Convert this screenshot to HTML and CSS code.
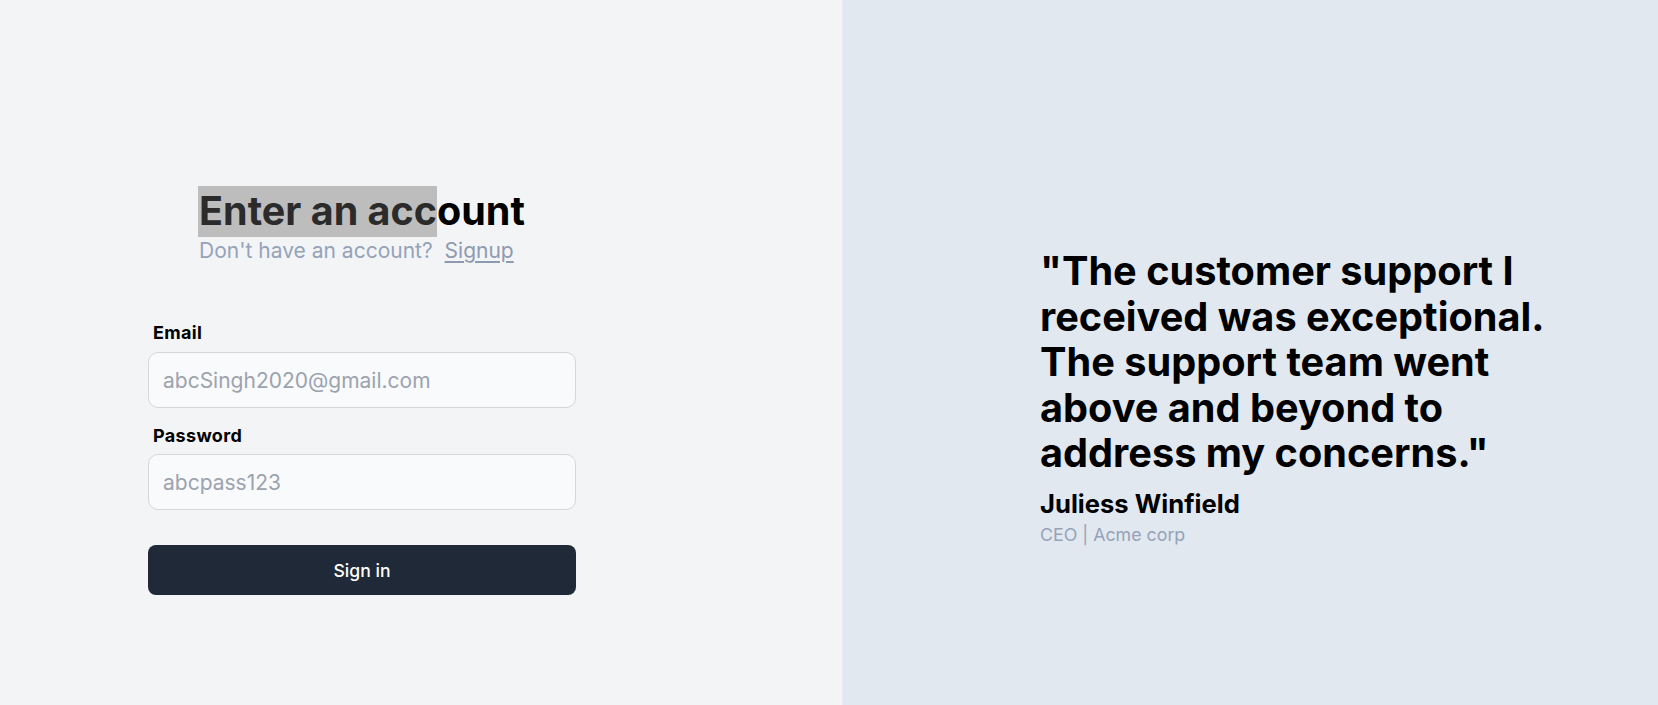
FILE: index.html
```html
<!DOCTYPE html>
<html lang="en">
<head>
<meta charset="utf-8">
<title>Sign in</title>
<link rel="stylesheet" href="styles.css">
</head>
<body>
<main class="page">
  <section class="auth">
    <div class="auth-inner">
      <div class="intro">
        <h1 class="title"><span class="sel">Enter an acc</span>ount</h1>
        <p class="subtitle">Don't have an account? <a class="link" href="#">Signup</a></p>
      </div>
      <form class="form">
        <label class="label" for="email">Email</label>
        <input class="input" id="email" type="email" placeholder="abcSingh2020@gmail.com">
        <label class="label label-gap" for="password">Password</label>
        <input class="input" id="password" type="password" placeholder="abcpass123">
        <button class="btn" type="button">Sign in</button>
      </form>
    </div>
  </section>
  <section class="testimonial">
    <blockquote class="quote">"The customer support I received was exceptional. The support team went above and beyond to address my concerns."</blockquote>
    <p class="name">Juliess Winfield</p>
    <p class="role">CEO | Acme corp</p>
  </section>
</main>
</body>
</html>
```
FILE: styles.css
```css
* { box-sizing: border-box; }
html, body { margin: 0; padding: 0; }
body {
  font-family: "Inter", "Noto Sans", sans-serif;
  color: #000;
}
.page {
  display: grid;
  grid-template-columns: 842px 1fr;
  height: 705px;
  overflow: hidden;
}
.auth {
  background: #f3f4f6;
  padding: 186px 0 0 148px;
}
.auth-inner {
  width: 428px;
  display: flex;
  flex-direction: column;
}
.intro {
  align-self: center;
  width: fit-content;
}
.title {
  margin: 0;
  font-size: 39.5px;
  font-weight: 700;
  line-height: 51px;
  white-space: nowrap;
}
.sel {
  display: inline-block;
  background: #bdbdbd;
  color: #2b2b2b;
  margin-left: -1px;
  padding-left: 1px;
}
.subtitle {
  margin: 0;
  font-size: 21px;
  line-height: 28px;
  color: #94a3b8;
  white-space: nowrap;
}
.link {
  color: #8e9ab0;
  text-decoration: underline;
  text-underline-offset: 3px;
  margin-left: 6px;
}
.form {
  display: flex;
  flex-direction: column;
  margin-top: 56px;
}
.label {
  font-size: 18px;
  font-weight: 700;
  line-height: 24px;
  letter-spacing: 0.35px;
  padding-left: 5px;
  margin-bottom: 7px;
}
.label-gap { margin-top: 16px; margin-bottom: 6px; }
.input {
  height: 56px;
  border: 1px solid #d4d7dc;
  border-radius: 10px;
  background: #f9fafb;
  padding: 0 14px;
  font-family: inherit;
  font-size: 21px;
  color: #111;
  outline: none;
}
.input::placeholder { color: #9ca3af; }
.btn {
  margin-top: 35px;
  height: 50px;
  border: 0;
  border-radius: 8px;
  background: #1f2937;
  color: #fff;
  font-family: inherit;
  font-size: 17.6px;
  font-weight: 500;
}
.testimonial {
  background: #e2e8f0;
  border-left: 1px solid #e5e9ef;
  padding: 249px 0 0 197px;
}
.quote {
  margin: 0;
  max-width: 520px;
  font-size: 39.7px;
  font-weight: 700;
  line-height: 45.5px;
}
.name {
  margin: 11px 0 0;
  font-size: 25.6px;
  font-weight: 700;
  line-height: 32px;
}
.role {
  margin: 3px 0 0;
  font-size: 17.8px;
  line-height: 24px;
  color: #94a3b8;
}
```
